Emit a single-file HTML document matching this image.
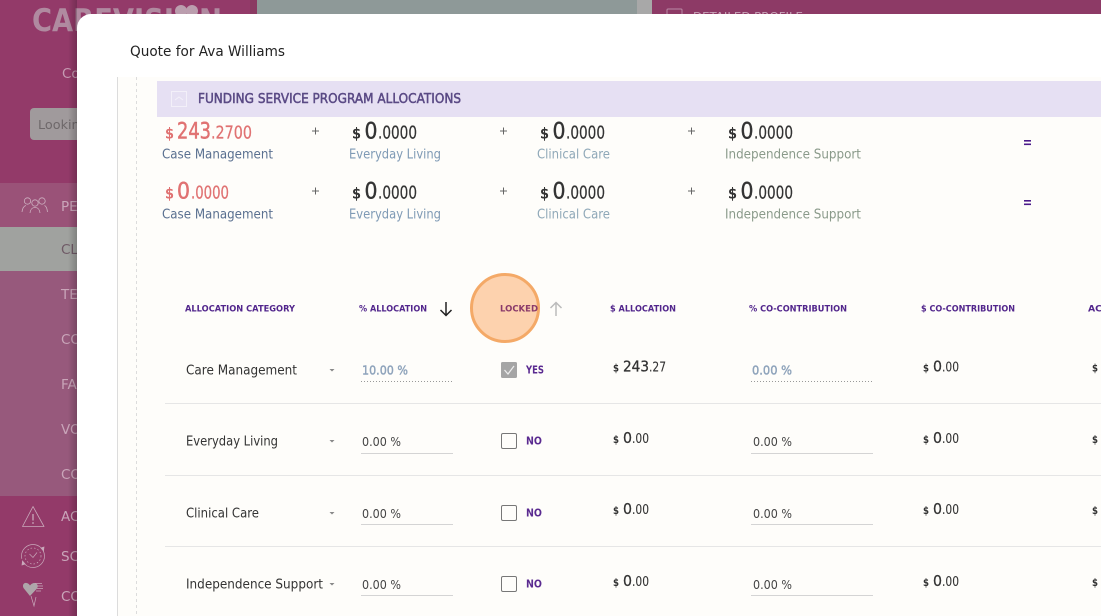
<!DOCTYPE html>
<html><head><meta charset="utf-8"><style>
html,body{margin:0;padding:0;width:1101px;height:616px;overflow:hidden;background:#fff}
svg{display:block}
text{font-family:"DejaVu Sans",sans-serif;white-space:pre}
.sb{font-size:13.500px;fill:#c9a5b9}
.lb{font-size:13.200px}
.hd{font-size:9.200px;font-weight:bold;fill:#52268c}
.row{font-size:13.200px;fill:#333}
.in{font-size:12.800px;fill:#444}
.yn{font-size:10.500px;font-weight:bold;fill:#5a2a90}
.bd{fill:#333}
.rd{fill:#e07272}
</style></head><body>
<svg width="1101" height="616" viewBox="0 0 1101 616" xmlns="http://www.w3.org/2000/svg">
<defs>
<linearGradient id="sh" x1="0" x2="1" y1="0" y2="0"><stop offset="0" stop-color="#000" stop-opacity="0"/><stop offset="1" stop-color="#000" stop-opacity=".2"/></linearGradient>
<g id="bx"><rect x="0.5" y="0.5" width="15" height="15" rx="1.500" fill="#fefdfa" stroke="#777" stroke-width="1"/></g>
</defs>
<!-- background -->
<rect width="257" height="616" fill="#933a69"/>
<rect x="250" width="7" height="20" fill="#8a3a62"/>
<rect x="257" width="380" height="20" fill="#8e9998"/>
<rect x="637" width="15" height="20" fill="#a8a8a8"/>
<rect x="652" width="449" height="20" fill="#8d3a66"/>
<rect x="667" y="9" width="15" height="15" rx="1" fill="none" stroke="#b98ba5"/>
<text x="693" y="20" font-size="10.500" fill="#c9a5b9" textLength="110" lengthAdjust="spacingAndGlyphs">DETAILED PROFILE</text>
<rect y="183" width="80" height="44" fill="#9a5278"/>
<rect y="227" width="80" height="44" fill="#a0a29f"/>
<rect y="271" width="80" height="225" fill="#97597c"/>
<text x="32" y="31" font-size="31" font-weight="bold" fill="#b08aa0" textLength="142" lengthAdjust="spacingAndGlyphs">CAREVISI</text>
<circle cx="181" cy="11" r="6" fill="#bb9eae"/><circle cx="192" cy="11" r="6" fill="#bb9eae"/>
<text x="199" y="31" font-size="31" font-weight="bold" fill="#b08aa0" textLength="23" lengthAdjust="spacingAndGlyphs">N</text>
<text x="62" y="78" class="sb" style="fill:#c59ab2">Co</text>
<rect x="30" y="108" width="60" height="32" rx="4" fill="#a09a9c"/>
<text x="38" y="129" font-size="12.800" fill="#6e686a">Looking</text>
<text x="61" y="211" class="sb">PE</text>
<text x="61" y="254" class="sb" style="fill:#6f5a66">CL</text>
<text x="61" y="299" class="sb">TE</text>
<text x="61" y="344" class="sb">CO</text>
<text x="61" y="389" class="sb">FA</text>
<text x="61" y="434" class="sb">VO</text>
<text x="61" y="479" class="sb">CO</text>
<text x="61" y="521" class="sb">AC</text>
<text x="61" y="561" class="sb">SC</text>
<text x="61" y="601" class="sb">CO</text>
<!-- people icon -->
<g fill="none" stroke="#cdb0c0" stroke-width=".8">
<circle cx="27.500" cy="201" r="3.200"/><circle cx="35" cy="203" r="3.200"/><circle cx="42" cy="201" r="3.200"/>
<path d="M22 212c.5-4 2-6 4-6.500M30 213c.5-4 2-5.500 5-5.500s4.500 1.500 5 5.500M44.500 205.500c1.500.5 2.500 2.500 3 6.500"/>
</g>
<!-- warning -->
<g fill="none" stroke="#c9a9bb" stroke-width=".8">
<path d="M33 506.500 44 526.500H22.500Z" stroke-linejoin="round"/>
<path d="M33 514v6.500" stroke-width="1.300"/><circle cx="33" cy="523" r=".5"/>
</g>
<!-- clock -->
<g fill="none" stroke="#c9a9bb" stroke-width=".7">
<circle cx="33" cy="556" r="11.500" stroke-dasharray="30 3 30 3"/><circle cx="33" cy="556" r="8" stroke-dasharray="1.500 2"/>
<path d="M29.500 554l3.500 3.500 4-5"/>
<path d="M41 548l3-1-.5 4ZM25 564l-3 1 .5-4Z" fill="#c9a9bb"/>
</g>
<!-- hearts -->
<g>
<path d="M30 596l-6.500-8c-1.500-3 .5-5.500 3-5 1.500.2 2.500 1 3.500 2.500 1-1.500 3-2.800 5-2.500 2.500.5 3.500 3 2 5.500Z" fill="#aea6aa"/>
<path d="M37 586h6M37 588.500h6M36 591h5M35 583.500h7M31 596l3 10 2-9" stroke="#c9a9bb" fill="none" stroke-width=".7"/>
</g>
<rect x="68" y="0" width="9" height="616" fill="url(#sh)"/>
<!-- modal -->
<path d="M91 14H1101V616H77V28A14 14 0 0 1 91 14Z" fill="#fff"/>
<rect x="118" y="77" width="983" height="539" fill="#fefdfa"/>
<rect x="117" y="77" width="1" height="539" fill="#dcdcdc"/>
<line x1="136.500" y1="77" x2="136.500" y2="616" stroke="#dcdcdc" stroke-dasharray="3 3"/>
<text x="130" y="56" font-size="14.200" fill="#222" textLength="155" lengthAdjust="spacingAndGlyphs">Quote for Ava Williams</text>
<!-- band -->
<rect x="157" y="81" width="944" height="36" fill="#e6e0f3"/>
<rect x="171.500" y="91.500" width="15" height="15" fill="none" stroke="#f3f0f9"/>
<path d="M175 100l4-3 4 3" fill="none" stroke="#f3f0f9"/>
<text x="198" y="103" font-size="13" fill="#5a4a85" stroke="#5a4a85" stroke-width=".5" textLength="263" lengthAdjust="spacingAndGlyphs">FUNDING SERVICE PROGRAM ALLOCATIONS</text>
<!-- summary 1 -->
<g>
<text x="165" y="138.500" font-size="15" font-weight="bold" class="rd" textLength="9" lengthAdjust="spacingAndGlyphs">$</text>
<text x="177" y="138.500" font-size="22" class="rd" textLength="34" lengthAdjust="spacingAndGlyphs" stroke="#e07272" stroke-width=".5">243</text>
<text x="211" y="138.500" font-size="17.500" class="rd" stroke="#e07272" stroke-width=".25" textLength="41" lengthAdjust="spacingAndGlyphs">.2700</text>
<text x="165" y="198.500" font-size="15" font-weight="bold" class="rd" textLength="9" lengthAdjust="spacingAndGlyphs">$</text>
<text x="177" y="198.500" font-size="22" class="rd" textLength="13" lengthAdjust="spacingAndGlyphs" stroke="#e07272" stroke-width=".5">0</text>
<text x="191" y="198.500" font-size="17.500" class="rd" stroke="#e07272" stroke-width=".25" textLength="38" lengthAdjust="spacingAndGlyphs">.0000</text>
</g>
<g class="bd">
<g id="v"><text x="352" y="138.500" font-size="15" font-weight="bold" textLength="9" lengthAdjust="spacingAndGlyphs">$</text><text x="364.500" y="138.500" font-size="22" textLength="13" lengthAdjust="spacingAndGlyphs" stroke="#333" stroke-width=".4">0</text><text x="378" y="138.500" font-size="17.500" stroke="#333" stroke-width=".2" textLength="39" lengthAdjust="spacingAndGlyphs">.0000</text></g>
<use href="#v" x="188"/><use href="#v" x="376"/>
<use href="#v" y="60"/><use href="#v" x="188" y="60"/><use href="#v" x="376" y="60"/>
</g>
<g class="lb">
<text x="162" y="158.500" fill="#5a7090" textLength="111" lengthAdjust="spacingAndGlyphs">Case Management</text>
<text x="349" y="158.500" fill="#7f9ab5" textLength="92" lengthAdjust="spacingAndGlyphs">Everyday Living</text>
<text x="537" y="158.500" fill="#8fa8b8" textLength="73" lengthAdjust="spacingAndGlyphs">Clinical Care</text>
<text x="725" y="158.500" fill="#8a9a8a" textLength="136" lengthAdjust="spacingAndGlyphs">Independence Support</text>
<text x="162" y="218.500" fill="#5a7090" textLength="111" lengthAdjust="spacingAndGlyphs">Case Management</text>
<text x="349" y="218.500" fill="#7f9ab5" textLength="92" lengthAdjust="spacingAndGlyphs">Everyday Living</text>
<text x="537" y="218.500" fill="#8fa8b8" textLength="73" lengthAdjust="spacingAndGlyphs">Clinical Care</text>
<text x="725" y="218.500" fill="#8a9a8a" textLength="136" lengthAdjust="spacingAndGlyphs">Independence Support</text>
</g>
<g stroke="#666" stroke-width="1" fill="none">
<path d="M312 131h7M315.500 127.500v7M500 131h7M503.500 127.500v7M688 131h7M691.500 127.500v7M312 191h7M315.500 187.500v7M500 191h7M503.500 187.500v7M688 191h7M691.500 187.500v7"/>
</g>
<g fill="#4a1a8a"><rect x="1024" y="140" width="7" height="1.600"/><rect x="1024" y="143.500" width="7" height="1.600"/><rect x="1024" y="200" width="7" height="1.600"/><rect x="1024" y="203.500" width="7" height="1.600"/></g>
<!-- header -->
<text x="185" y="311.500" class="hd" textLength="110" lengthAdjust="spacingAndGlyphs">ALLOCATION CATEGORY</text>
<text x="359" y="311.500" class="hd" textLength="68" lengthAdjust="spacingAndGlyphs">% ALLOCATION</text>
<path d="M446 302v13M440.500 310l5.500 5.500 5.500-5.500" fill="none" stroke="#222" stroke-width="1.500"/>
<circle cx="505" cy="308" r="33.500" fill="#fdd2ae" stroke="#f4a967" stroke-width="3"/>
<text x="500" y="311.500" class="hd" style="fill:#8a3a6a" textLength="38" lengthAdjust="spacingAndGlyphs">LOCKED</text>
<path d="M556 316v-13M550.500 308l5.500-5.500 5.500 5.500" fill="none" stroke="#bbb" stroke-width="1.500"/>
<text x="610" y="311.500" class="hd" textLength="66" lengthAdjust="spacingAndGlyphs">$ ALLOCATION</text>
<text x="749" y="311.500" class="hd" textLength="98" lengthAdjust="spacingAndGlyphs">% CO-CONTRIBUTION</text>
<text x="921" y="311.500" class="hd" textLength="94" lengthAdjust="spacingAndGlyphs">$ CO-CONTRIBUTION</text>
<text x="1088" y="311.500" class="hd" textLength="14" lengthAdjust="spacingAndGlyphs">AC</text>
<!-- separators -->
<g fill="#e6e6e6"><rect x="165" y="403" width="936" height="1"/><rect x="165" y="475" width="936" height="1"/><rect x="165" y="546" width="936" height="1"/></g>
<!-- carets -->
<g fill="#888"><path d="M329.500 369h5l-2.500 2.500ZM329.500 440h5l-2.500 2.500ZM329.500 512h5l-2.500 2.500ZM329.500 583h5l-2.500 2.500Z"/></g>
<!-- row names -->
<text x="186" y="374.500" class="row" textLength="111" lengthAdjust="spacingAndGlyphs">Care Management</text>
<text x="186" y="445.500" class="row" textLength="92" lengthAdjust="spacingAndGlyphs">Everyday Living</text>
<text x="186" y="517.500" class="row" textLength="73" lengthAdjust="spacingAndGlyphs">Clinical Care</text>
<text x="186" y="588.500" class="row" textLength="137" lengthAdjust="spacingAndGlyphs">Independence Support</text>
<!-- inputs -->
<text x="362" y="374.500" class="in" style="fill:#8ea3bb" stroke="#8ea3bb" stroke-width=".45" textLength="46" lengthAdjust="spacingAndGlyphs">10.00 %</text>
<text x="752" y="374.500" class="in" style="fill:#8ea3bb" stroke="#8ea3bb" stroke-width=".45" textLength="40" lengthAdjust="spacingAndGlyphs">0.00 %</text>
<line x1="361" x2="453" y1="381.500" y2="381.500" stroke="#999" stroke-dasharray="1 2"/>
<line x1="751" x2="873" y1="381.500" y2="381.500" stroke="#999" stroke-dasharray="1 2"/>
<text x="362" y="446" class="in" textLength="39" lengthAdjust="spacingAndGlyphs">0.00 %</text>
<text x="753" y="446" class="in" textLength="39" lengthAdjust="spacingAndGlyphs">0.00 %</text>
<text x="362" y="518" class="in" textLength="39" lengthAdjust="spacingAndGlyphs">0.00 %</text>
<text x="753" y="518" class="in" textLength="39" lengthAdjust="spacingAndGlyphs">0.00 %</text>
<text x="362" y="589" class="in" textLength="39" lengthAdjust="spacingAndGlyphs">0.00 %</text>
<text x="753" y="589" class="in" textLength="39" lengthAdjust="spacingAndGlyphs">0.00 %</text>
<g fill="#d4d4d4">
<rect x="361" y="453" width="92" height="1"/><rect x="751" y="453" width="122" height="1"/>
<rect x="361" y="524" width="92" height="1"/><rect x="751" y="524" width="122" height="1"/>
<rect x="361" y="595" width="92" height="1"/><rect x="751" y="595" width="122" height="1"/>
</g>
<!-- checkboxes -->
<rect x="501" y="362" width="16" height="16" rx="1.500" fill="#a5a5a5"/>
<path d="M504.500 370l3.500 4 6-8" fill="none" stroke="#eee" stroke-width="1.200"/>
<use href="#bx" x="501" y="433"/><use href="#bx" x="501" y="505"/><use href="#bx" x="501" y="576"/>
<text x="526" y="373.500" class="yn" textLength="18" lengthAdjust="spacingAndGlyphs">YES</text>
<text x="526" y="444.500" class="yn" textLength="16" lengthAdjust="spacingAndGlyphs">NO</text>
<text x="526" y="516.500" class="yn" textLength="16" lengthAdjust="spacingAndGlyphs">NO</text>
<text x="526" y="587.500" class="yn" textLength="16" lengthAdjust="spacingAndGlyphs">NO</text>
<!-- amounts -->
<g class="bd">
<text x="613" y="371.500" font-size="11" font-weight="bold" textLength="6" lengthAdjust="spacingAndGlyphs">$</text>
<text x="623" y="371.500" font-size="15" textLength="26" lengthAdjust="spacingAndGlyphs" stroke="#333" stroke-width=".3">243</text>
<text x="649" y="371.500" font-size="13.500" stroke="#333" stroke-width=".1" textLength="17" lengthAdjust="spacingAndGlyphs">.27</text>
<g id="a"><text x="613" y="443" font-size="11" font-weight="bold" textLength="6" lengthAdjust="spacingAndGlyphs">$</text><text x="623" y="443" font-size="15" textLength="9" lengthAdjust="spacingAndGlyphs" stroke="#333" stroke-width=".3">0</text><text x="632" y="443" font-size="13.500" stroke="#333" stroke-width=".1" textLength="17" lengthAdjust="spacingAndGlyphs">.00</text></g>
<use href="#a" y="71"/><use href="#a" y="143"/>
<g id="b"><text x="923" y="371.500" font-size="11" font-weight="bold" textLength="6" lengthAdjust="spacingAndGlyphs">$</text><text x="933" y="371.500" font-size="15" textLength="9" lengthAdjust="spacingAndGlyphs" stroke="#333" stroke-width=".3">0</text><text x="942" y="371.500" font-size="13.500" stroke="#333" stroke-width=".1" textLength="17" lengthAdjust="spacingAndGlyphs">.00</text></g>
<use href="#b" y="71.500"/><use href="#b" y="142.500"/><use href="#b" y="214.500"/>
<text x="1092" y="371.500" font-size="11" font-weight="bold" textLength="6" lengthAdjust="spacingAndGlyphs">$</text>
<text x="1092" y="443" font-size="11" font-weight="bold" textLength="6" lengthAdjust="spacingAndGlyphs">$</text>
<text x="1092" y="514" font-size="11" font-weight="bold" textLength="6" lengthAdjust="spacingAndGlyphs">$</text>
<text x="1092" y="586" font-size="11" font-weight="bold" textLength="6" lengthAdjust="spacingAndGlyphs">$</text>
</g>
</svg>
</body></html>
